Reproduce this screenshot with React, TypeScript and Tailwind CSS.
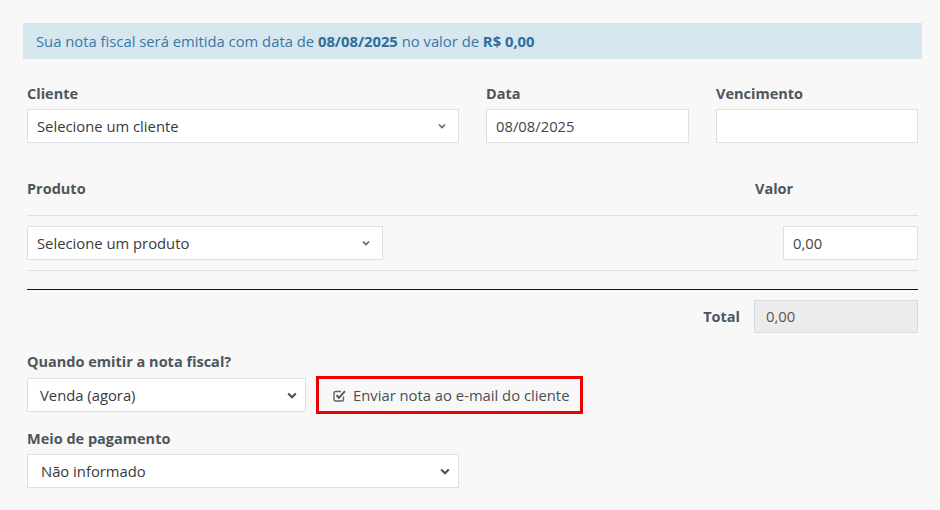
import React from "react";

const font = { fontFamily: '"Open Sans", "Noto Sans", sans-serif' };

function SmallChevron() {
  return (
    <svg width="8" height="6" viewBox="0 0 8 6" className="shrink-0">
      <polyline points="1,1.5 4,4.5 7,1.5" fill="none" stroke="#4f6a85" strokeWidth="1.6" />
    </svg>
  );
}

function BoldChevron() {
  return (
    <svg width="10" height="7" viewBox="0 0 10 7" className="shrink-0">
      <polyline points="1.2,1.5 5,5.2 8.8,1.5" fill="none" stroke="#505050" strokeWidth="2.2" />
    </svg>
  );
}

function Label({ children, className = "" }: { children: React.ReactNode; className?: string }) {
  return <div className={`text-[14.5px] leading-[20px] font-bold text-[#4e555b] ${className}`}>{children}</div>;
}

export default function App() {
  return (
    <div className="min-h-[510px] w-[940px] bg-[#f8f8f8] pt-[23px] pl-[23px]" style={font}>
      <div className="w-[899px] h-[36px] bg-[#d6e7f0] flex items-center pl-[13px] text-[14.8px] text-[#3a78a5]">
        <span>
          Sua nota fiscal será emitida com data de <b className="text-[#2f6d9a]">08/08/2025</b> no valor de{" "}
          <b className="text-[#2f6d9a]">R$ 0,00</b>
        </span>
      </div>

      <div className="w-[891px] ml-[4px] text-[14.8px] text-[#3a3a3a]">
        {/* Row 1 */}
        <div className="flex mt-[25px]">
          <div className="w-[432px]">
            <Label>Cliente</Label>
            <div className="mt-[5px] h-[34px] bg-white border border-[#dde1e4] flex items-center justify-between pl-[9px] pr-[12px]">
              <span>Selecione um cliente</span>
              <SmallChevron />
            </div>
          </div>
          <div className="w-[203px] ml-[27px]">
            <Label>Data</Label>
            <div className="mt-[5px] h-[34px] bg-white border border-[#dde1e4] flex items-center pl-[9px] text-[#444]">
              08/08/2025
            </div>
          </div>
          <div className="w-[202px] ml-[27px]">
            <Label>Vencimento</Label>
            <div className="mt-[5px] h-[34px] bg-white border border-[#dde1e4]" />
          </div>
        </div>

        {/* Produto header */}
        <div className="flex mt-[36px]">
          <Label className="w-[728px]">Produto</Label>
          <Label>Valor</Label>
        </div>
        <div className="mt-[16px] h-px bg-[#dfdfdf]" />
        <div className="flex justify-between py-[10px]">
          <div className="w-[356px] h-[34px] bg-white border border-[#dde1e4] flex items-center justify-between pl-[9px] pr-[12px]">
            <span>Selecione um produto</span>
            <SmallChevron />
          </div>
          <div className="w-[135px] h-[34px] bg-white border border-[#dde1e4] flex items-center pl-[9px] text-[#444]">
            0,00
          </div>
        </div>
        <div className="h-px bg-[#dfdfdf]" />
        <div className="mt-[18px] h-px bg-[#111]" />

        {/* Total */}
        <div className="flex justify-end items-center mt-[10px]">
          <Label className="mr-[14px]">Total</Label>
          <div className="w-[164px] h-[33px] bg-[#ececec] border border-[#d8dcdf] flex items-center pl-[11px] text-[#555]">
            0,00
          </div>
        </div>

        {/* Quando emitir */}
        <div className="mt-[19px]">
          <Label>Quando emitir a nota fiscal?</Label>
          <div className="flex items-center mt-[4px]">
            <div className="w-[279px] h-[34px] bg-white border border-[#dde1e4] flex items-center justify-between pl-[12px] pr-[8px]">
              <span>Venda (agora)</span>
              <BoldChevron />
            </div>
            <div className="ml-[10px] w-[267px] h-[38px] border-[3px] border-[#ee0000] flex items-center pl-[14px] text-[#4a4f55]">
              <svg width="13" height="13" viewBox="0 0 13 13" className="shrink-0">
                <path d="M10.5 7.5 V10.5 A1.5 1.5 0 0 1 9 12 H2.5 A1.5 1.5 0 0 1 1 10.5 V4 A1.5 1.5 0 0 1 2.5 2.5 H8" fill="none" stroke="#5a6570" strokeWidth="1.4" />
                <polyline points="3.5,6.3 6,8.8 12,2.2" fill="none" stroke="#4f5b68" strokeWidth="2" />
              </svg>
              <span className="ml-[7px]">Enviar nota ao e-mail do cliente</span>
            </div>
          </div>
        </div>

        {/* Meio de pagamento */}
        <div className="mt-[15px]">
          <Label>Meio de pagamento</Label>
          <div className="mt-[5px] w-[432px] h-[34px] bg-white border border-[#dde1e4] flex items-center justify-between pl-[13px] pr-[8px]">
            <span>Não informado</span>
            <BoldChevron />
          </div>
        </div>
      </div>
    </div>
  );
}
